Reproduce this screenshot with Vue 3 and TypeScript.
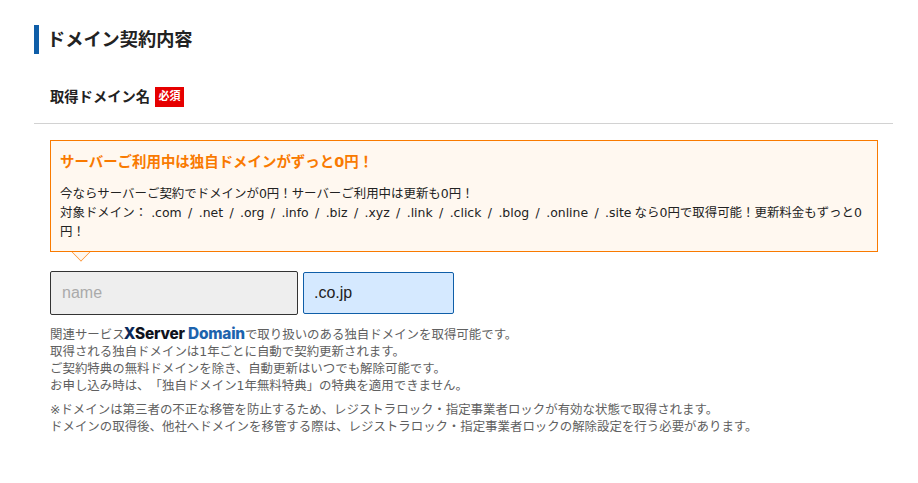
<script setup lang="ts">
const tlds: string = ".com / .net / .org / .info / .biz / .xyz / .link / .click / .blog / .online / .site"
</script>

<template>
  <section class="page">
    <h2 class="title">ドメイン契約内容</h2>
    <div class="label-row">
      <span class="label">取得ドメイン名</span>
      <span class="req">必須</span>
    </div>
    <div class="body">
      <div class="notice">
        <p class="notice-head">サーバーご利用中は独自ドメインがずっと0円！</p>
        <p class="notice-text">今ならサーバーご契約でドメインが0円！サーバーご利用中は更新も0円！<br />対象ドメイン：&#8196;{{ tlds }}&#8197;なら0円で取得可能！更新料金もずっと0円！</p>
      </div>
      <div class="fields">
        <input class="name" type="text" placeholder="name" />
        <div class="tld">.co.jp</div>
      </div>
      <p class="note first">関連サービス<span class="logo"><b class="x">X</b><b class="s">Server</b> <b class="d">Domain</b></span>で取り扱いのある独自ドメインを取得可能です。<br />取得される独自ドメインは1年ごとに自動で契約更新されます。<br />ご契約特典の無料ドメインを除き、自動更新はいつでも解除可能です。<br />お申し込み時は、「独自ドメイン1年無料特典」の特典を適用できません。</p>
      <p class="note second">※ドメインは第三者の不正な移管を防止するため、レジストラロック・指定事業者ロックが有効な状態で取得されます。<br />ドメインの取得後、他社へドメインを移管する際は、レジストラロック・指定事業者ロックの解除設定を行う必要があります。</p>
    </div>
  </section>
</template>

<style>
html, body { background: #fff; }
</style>

<style scoped>
.page {
  padding: 25px 25px 0 34px;
  font-family: "DejaVu Sans", "Noto Sans CJK JP", sans-serif;
  color: #222;
  text-spacing-trim: space-all;
}
.title {
  margin: 0;
  height: 29px;
  line-height: 30px;
  padding-left: 8px;
  border-left: 5px solid #0f5ea8;
  font-size: 18.2px;
  font-weight: 700;
  color: #222;
}
.label-row {
  display: flex;
  align-items: center;
  gap: 5px;
  padding: 0 0 16px 16px;
  margin-top: 33px;
  height: 20px;
  border-bottom: 1px solid #d2d2d2;
  box-sizing: content-box;
}
.label { font-size: 14.3px; font-weight: 700; padding-bottom: 4px; }
.req {
  width: 29px;
  flex: none;
  height: 20px;
  background: #e60000;
  color: #fff;
  font-size: 11px;
  font-weight: 700;
  line-height: 20px;
  text-align: center;
}
.body { padding: 16px 15px 0 16px; }
.notice {
  position: relative;
  box-sizing: border-box;
  height: 112px;
  padding: 11px 10px 0 9px;
  border: 1px solid #f97a00;
  background: #fff8f0;
}
.notice::after {
  content: "";
  position: absolute;
  left: 23px;
  bottom: -8px;
  width: 13px;
  height: 13px;
  background: #fff8f0;
  border-right: 1px solid #fb9a40;
  border-bottom: 1px solid #fb9a40;
  transform: rotate(45deg);
  clip-path: polygon(100% 0, 100% 100%, 0 100%);
}
.notice-head {
  margin: 0;
  font-size: 14.45px;
  font-weight: 700;
  line-height: 20px;
  color: #f97a00;
}
.notice-text {
  margin: 12px 0 0;
  font-size: 12.45px;
  line-height: 19px;
  color: #222;
  word-spacing: 2.45px;
}
.fields {
  display: flex;
  align-items: center;
  gap: 5px;
  margin-top: 19px;
}
.name {
  box-sizing: border-box;
  width: 248px;
  height: 44px;
  padding: 0 11px;
  border: 1px solid #333;
  border-radius: 2px;
  background: #eee;
  font-family: "Liberation Sans", sans-serif;
  font-size: 16px;
  outline: none;
}
.name::placeholder { color: #aaa; opacity: 1; }
.tld {
  box-sizing: border-box;
  width: 151px;
  height: 42px;
  padding-left: 10px;
  border: 1px solid #0f5ea8;
  border-radius: 2px;
  background: #d5e9ff;
  font-family: "Liberation Sans", sans-serif;
  font-size: 16px;
  line-height: 40px;
  color: #222;
}
.note {
  margin: 0;
  font-size: 12.45px;
  line-height: 17px;
  color: #606060;
}
.first { margin-top: 10px; }
.second { margin-top: 7px; }
.logo { font-family: Inter, sans-serif; font-size: 15.4px; letter-spacing: -0.2px; font-weight: 800; margin-left: -1px; }
.x { color: #0a2a5c; font-weight: 800; }
.s { color: #10131c; font-weight: 800; }
.d { color: #1d63ad; font-weight: 800; }
</style>
